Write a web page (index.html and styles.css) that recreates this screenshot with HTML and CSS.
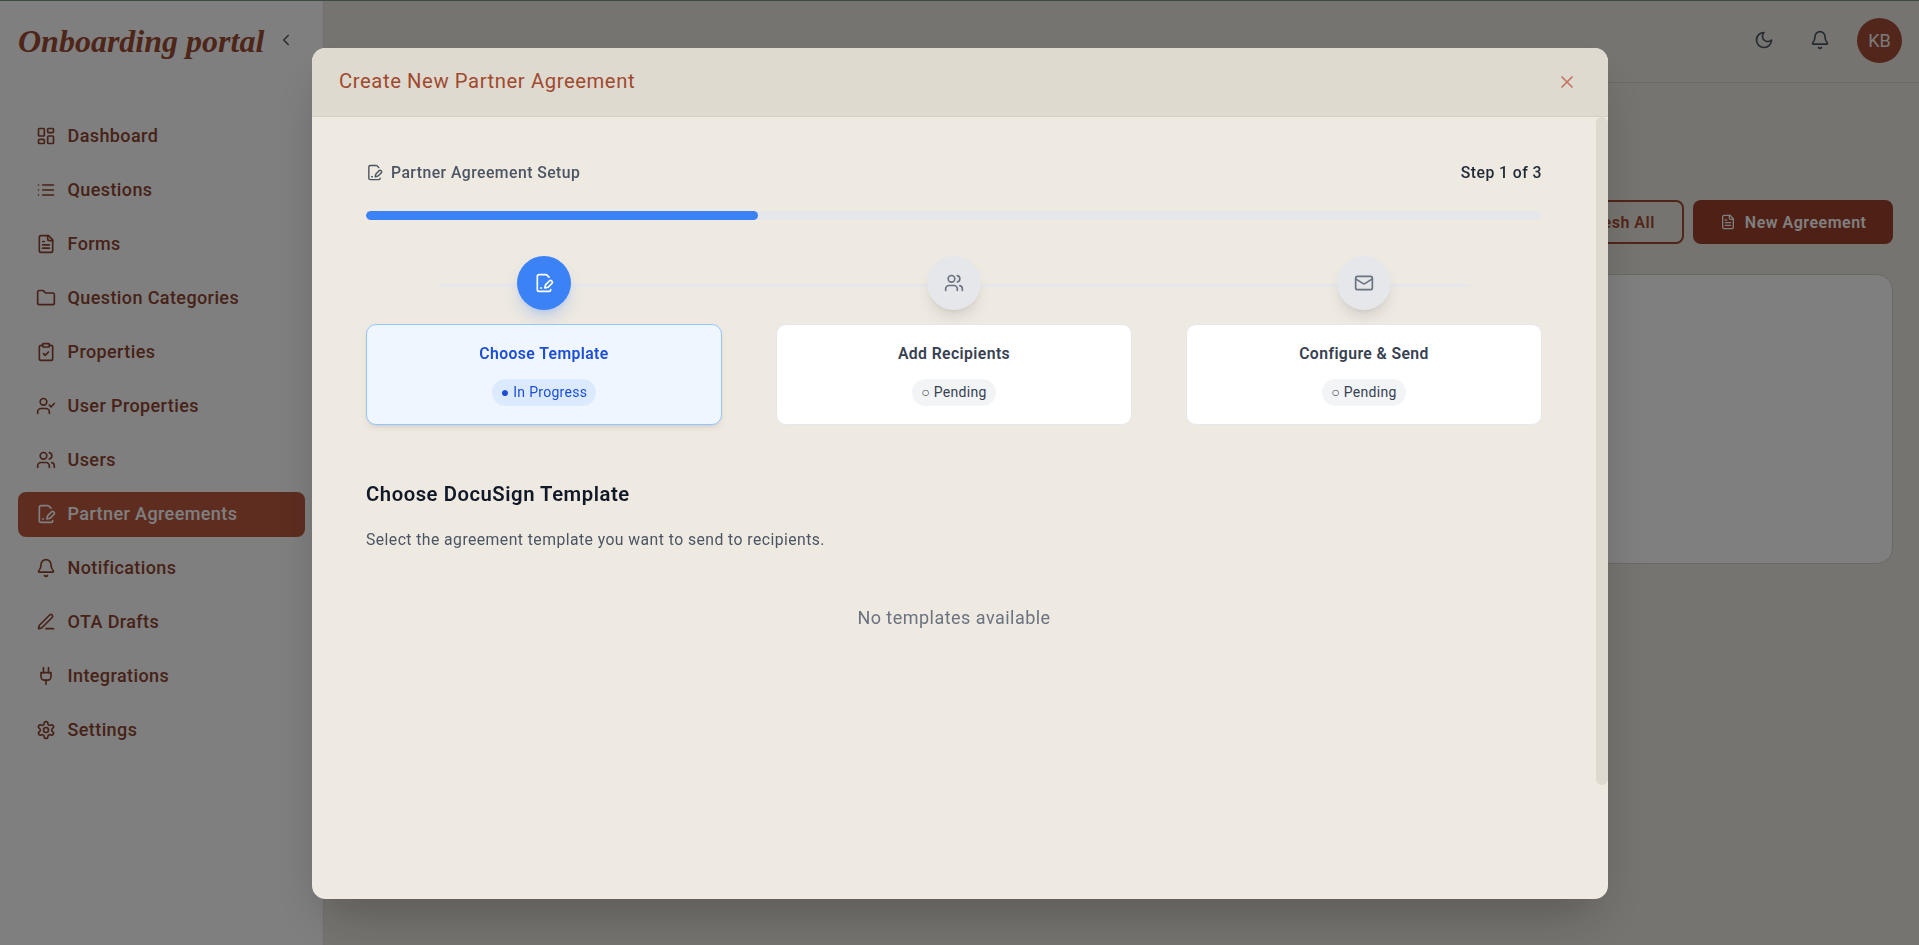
FILE: index.html
```html
<!DOCTYPE html>
<html lang="en">
<head>
<meta charset="utf-8">
<title>Onboarding portal</title>
<link rel="stylesheet" href="styles.css">
</head>
<body>
<svg class="sprite" xmlns="http://www.w3.org/2000/svg" aria-hidden="true">
  <symbol id="i-dashboard" viewBox="0 0 24 24"><rect width="7" height="9" x="3" y="3" rx="1"/><rect width="7" height="5" x="14" y="3" rx="1"/><rect width="7" height="9" x="14" y="12" rx="1"/><rect width="7" height="5" x="3" y="16" rx="1"/></symbol>
  <symbol id="i-list" viewBox="0 0 24 24"><path d="M3 12h.01M3 18h.01M3 6h.01M8 12h13M8 18h13M8 6h13"/></symbol>
  <symbol id="i-file" viewBox="0 0 24 24"><path d="M15 2H6a2 2 0 0 0-2 2v16a2 2 0 0 0 2 2h12a2 2 0 0 0 2-2V7Z"/><path d="M14 2v4a2 2 0 0 0 2 2h4"/><path d="M10 9H8M16 13H8M16 17H8"/></symbol>
  <symbol id="i-folder" viewBox="0 0 24 24"><path d="M20 20a2 2 0 0 0 2-2V8a2 2 0 0 0-2-2h-7.9a2 2 0 0 1-1.69-.9L9.6 3.9A2 2 0 0 0 7.93 3H4a2 2 0 0 0-2 2v13a2 2 0 0 0 2 2Z"/></symbol>
  <symbol id="i-clipboard" viewBox="0 0 24 24"><rect width="8" height="4" x="8" y="2" rx="1" ry="1"/><path d="M16 4h2a2 2 0 0 1 2 2v14a2 2 0 0 1-2 2H6a2 2 0 0 1-2-2V6a2 2 0 0 1 2-2h2"/><path d="m9 14 2 2 4-4"/></symbol>
  <symbol id="i-user-check" viewBox="0 0 24 24"><path d="M16 21v-2a4 4 0 0 0-4-4H6a4 4 0 0 0-4 4v2"/><circle cx="9" cy="7" r="4"/><polyline points="16 11 18 13 22 9"/></symbol>
  <symbol id="i-users" viewBox="0 0 24 24"><path d="M16 21v-2a4 4 0 0 0-4-4H6a4 4 0 0 0-4 4v2"/><circle cx="9" cy="7" r="4"/><path d="M22 21v-2a4 4 0 0 0-3-3.87"/><path d="M16 3.13a4 4 0 0 1 0 7.75"/></symbol>
  <symbol id="i-file-pen" viewBox="0 0 24 24"><path d="m18 5-2.414-2.414A2 2 0 0 0 14.172 2H6a2 2 0 0 0-2 2v16a2 2 0 0 0 2 2h12a2 2 0 0 0 2-2"/><path d="M21.378 12.626a1 1 0 0 0-3.004-3.004l-4.01 4.012a2 2 0 0 0-.506.854l-.837 2.87a.5.5 0 0 0 .62.62l2.87-.837a2 2 0 0 0 .854-.506z"/><path d="M8 18h1"/></symbol>
  <symbol id="i-bell" viewBox="0 0 24 24"><path d="M10.268 21a2 2 0 0 0 3.464 0"/><path d="M3.262 15.326A1 1 0 0 0 4 17h16a1 1 0 0 0 .74-1.673C19.41 13.956 18 12.499 18 8A6 6 0 0 0 6 8c0 4.499-1.411 5.956-2.738 7.326"/></symbol>
  <symbol id="i-pen" viewBox="0 0 24 24"><path d="M12 20h9"/><path d="M16.376 3.622a1 1 0 0 1 3.002 3.002L7.368 18.635a2 2 0 0 1-.855.506l-2.872.838a.5.5 0 0 1-.62-.62l.838-2.872a2 2 0 0 1 .506-.854z"/></symbol>
  <symbol id="i-plug" viewBox="0 0 24 24"><path d="M12 22v-5M9 8V2M15 8V2"/><path d="M18 8v5a4 4 0 0 1-4 4h-4a4 4 0 0 1-4-4V8Z"/></symbol>
  <symbol id="i-settings" viewBox="0 0 24 24"><path d="M12.22 2h-.44a2 2 0 0 0-2 2v.18a2 2 0 0 1-1 1.73l-.43.25a2 2 0 0 1-2 0l-.15-.08a2 2 0 0 0-2.73.73l-.22.38a2 2 0 0 0 .73 2.73l.15.1a2 2 0 0 1 1 1.72v.51a2 2 0 0 1-1 1.74l-.15.09a2 2 0 0 0-.73 2.73l.22.38a2 2 0 0 0 2.73.73l.15-.08a2 2 0 0 1 2 0l.43.25a2 2 0 0 1 1 1.73V20a2 2 0 0 0 2 2h.44a2 2 0 0 0 2-2v-.18a2 2 0 0 1 1-1.73l.43-.25a2 2 0 0 1 2 0l.15.08a2 2 0 0 0 2.73-.73l.22-.39a2 2 0 0 0-.73-2.73l-.15-.08a2 2 0 0 1-1-1.74v-.5a2 2 0 0 1 1-1.74l.15-.09a2 2 0 0 0 .73-2.73l-.22-.38a2 2 0 0 0-2.73-.73l-.15.08a2 2 0 0 1-2 0l-.43-.25a2 2 0 0 1-1-1.73V4a2 2 0 0 0-2-2z"/><circle cx="12" cy="12" r="3"/></symbol>
  <symbol id="i-moon" viewBox="0 0 24 24"><path d="M12 3a6 6 0 0 0 9 9 9 9 0 1 1-9-9Z"/></symbol>
  <symbol id="i-mail" viewBox="0 0 24 24"><rect width="20" height="16" x="2" y="4" rx="2"/><path d="m22 7-8.97 5.7a1.94 1.94 0 0 1-2.06 0L2 7"/></symbol>
  <symbol id="i-x" viewBox="0 0 24 24"><path d="M18 6 6 18M6 6l12 12"/></symbol>
  <symbol id="i-chevron" viewBox="0 0 24 24"><path d="m15 18-6-6 6-6"/></symbol>
</svg>

<div class="app">
  <aside class="sidebar">
    <div class="brand">
      <span class="brand-name">Onboarding portal</span>
      <svg class="icon chevron"><use href="#i-chevron"/></svg>
    </div>
    <nav class="nav">
      <a class="nav-item"><svg class="icon"><use href="#i-dashboard"/></svg>Dashboard</a>
      <a class="nav-item"><svg class="icon"><use href="#i-list"/></svg>Questions</a>
      <a class="nav-item"><svg class="icon"><use href="#i-file"/></svg>Forms</a>
      <a class="nav-item"><svg class="icon"><use href="#i-folder"/></svg>Question Categories</a>
      <a class="nav-item"><svg class="icon"><use href="#i-clipboard"/></svg>Properties</a>
      <a class="nav-item"><svg class="icon"><use href="#i-user-check"/></svg>User Properties</a>
      <a class="nav-item"><svg class="icon"><use href="#i-users"/></svg>Users</a>
      <a class="nav-item active"><svg class="icon"><use href="#i-file-pen"/></svg>Partner Agreements</a>
      <a class="nav-item"><svg class="icon"><use href="#i-bell"/></svg>Notifications</a>
      <a class="nav-item"><svg class="icon"><use href="#i-pen"/></svg>OTA Drafts</a>
      <a class="nav-item"><svg class="icon"><use href="#i-plug"/></svg>Integrations</a>
      <a class="nav-item"><svg class="icon"><use href="#i-settings"/></svg>Settings</a>
    </nav>
  </aside>
  <main class="main">
    <header class="topbar">
      <svg class="icon top-icon"><use href="#i-moon"/></svg>
      <svg class="icon top-icon"><use href="#i-bell"/></svg>
      <div class="avatar">KB</div>
    </header>
    <section class="page">
      <div class="actions">
        <button class="btn btn-outline">Refresh All</button>
        <button class="btn btn-solid"><svg class="icon btn-icon"><use href="#i-file"/></svg>New Agreement</button>
      </div>
      <div class="panel"></div>
    </section>
  </main>
</div>

<div class="backdrop"></div>
<div class="modal">
  <div class="modal-head">
    <h2 class="modal-title">Create New Partner Agreement</h2>
    <svg class="icon close"><use href="#i-x"/></svg>
  </div>
  <div class="modal-body">
    <div class="modal-thumb"></div>
    <div class="modal-content">
      <div class="setup-row">
        <span class="setup-label"><svg class="icon setup-icon"><use href="#i-file-pen"/></svg>Partner Agreement Setup</span>
        <span class="setup-step">Step 1 of 3</span>
      </div>
      <div class="progress"><div class="progress-fill"></div></div>
      <div class="steps">
        <div class="steps-line"></div>
        <div class="step current">
          <div class="step-circle"><svg class="icon"><use href="#i-file-pen"/></svg></div>
          <div class="step-card">
            <div class="step-title">Choose Template</div>
            <span class="step-badge">● In Progress</span>
          </div>
        </div>
        <div class="step">
          <div class="step-circle"><svg class="icon"><use href="#i-users"/></svg></div>
          <div class="step-card">
            <div class="step-title">Add Recipients</div>
            <span class="step-badge">○ Pending</span>
          </div>
        </div>
        <div class="step">
          <div class="step-circle"><svg class="icon"><use href="#i-mail"/></svg></div>
          <div class="step-card">
            <div class="step-title">Configure &amp; Send</div>
            <span class="step-badge">○ Pending</span>
          </div>
        </div>
      </div>
      <h3 class="section-title">Choose DocuSign Template</h3>
      <p class="section-text">Select the agreement template you want to send to recipients.</p>
      <p class="empty">No templates available</p>
    </div>
  </div>
</div>
</body>
</html>
```

FILE: styles.css
```css
* { box-sizing: border-box; }
html, body { margin: 0; height: 100%; overflow: hidden; }
body {
  font-family: Roboto, "Liberation Sans", sans-serif;
  background: #ede9e1;
  border-top: 1px solid #7f957c;
}
.sprite { display: none; }
.icon {
  width: 20px; height: 20px; flex: none;
  fill: none; stroke: currentColor; stroke-width: 2;
  stroke-linecap: round; stroke-linejoin: round;
}
.app { display: flex; height: 944px; }

.sidebar {
  width: 324px; flex: none; background: #fff;
  border-right: 1px solid #e2ded6;
  display: flex; flex-direction: column;
}
.brand {
  height: 112.5px; padding: 0 18px 32px;
  display: flex; align-items: center; justify-content: space-between;
}
.brand-name {
  font-family: "Liberation Serif", serif; font-style: italic; font-weight: 700;
  font-size: 32px; color: #9c4a33; white-space: nowrap;
}
.chevron { width: 18px; height: 18px; color: #555; margin: 0 10px 2px 0; }
.nav { display: flex; flex-direction: column; gap: 9px; padding: 0 18px; }
.nav-item {
  height: 45px; padding: 0 18px 1px; border-radius: 8px;
  display: flex; align-items: center; gap: 11.5px;
  font-size: 18px; font-weight: 500; letter-spacing: .4px; color: #8f4530;
}
.nav-item.active { background: #bc5a41; color: #fff; }

.main { flex: 1; min-width: 0; display: flex; flex-direction: column; }
.topbar {
  height: 82px; flex: none; border-bottom: 1px solid #d8d4cc;
  display: flex; align-items: center; justify-content: flex-end;
  padding: 0 17px 3px 0;
}
.top-icon { color: #4b5563; margin-right: 36px; }
.top-icon + .top-icon { margin-right: 27px; }
.avatar {
  width: 45px; height: 45px; border-radius: 50%; background: #a44c34; color: #f4f4f4;
  display: flex; align-items: center; justify-content: center;
  font-size: 18px; font-weight: 450;
}
.page { padding: 117px 26px 0 27px; }
.actions { display: flex; justify-content: flex-end; gap: 9px; }
.btn {
  height: 44px; border-radius: 8px; padding: 0 27px;
  display: flex; align-items: center; gap: 9px;
  font-family: inherit; font-size: 16px; font-weight: 600; letter-spacing: .5px;
}
.btn-outline { background: transparent; border: 2px solid #a44a33; color: #a44a33; padding: 0 27.5px; }
.btn-solid { background: #9e402a; border: 0; color: #fff; padding: 0 26.5px; }
.btn-icon { width: 16px; height: 16px; }
.panel {
  height: 290px; margin-top: 30px; background: #fff;
  border: 1px solid #d5d1c8; border-radius: 16px;
}

.backdrop { position: fixed; inset: 0; background: rgba(0,0,0,.5); }
.modal {
  position: fixed; left: 312px; top: 48px; width: 1296px; height: 851px;
  background: #eee9e1; border-radius: 13.5px; overflow: hidden;
  display: flex; flex-direction: column;
  box-shadow: 0 25px 50px -12px rgba(0,0,0,.25);
}
.modal-head {
  height: 69px; flex: none; background: #dfdacf; border-bottom: 1px solid #d5d0c5;
  display: flex; align-items: center; justify-content: space-between;
  padding: 0 31px 2px 27px;
}
.modal-title { margin: 0; font-size: 20.25px; font-weight: 450; letter-spacing: .58px; color: #a0492f; }
.close { color: #c2745f; margin-top: 2px; }
.modal-body { position: relative; flex: 1; min-height: 0; padding-right: 12px; overflow: hidden; }
.modal-thumb {
  position: absolute; top: 0; right: 0; width: 12px; height: 668px;
  background: #dfdacf; border-radius: 6px;
}
.modal-content { padding: 43px 54px 0; }
.setup-row {
  height: 24px; display: flex; align-items: center; justify-content: space-between;
  font-size: 15.75px; font-weight: 500; letter-spacing: .45px;
}
.setup-label { display: flex; align-items: center; gap: 8px; color: #4b5563; }
.setup-icon { width: 17px; height: 17px; }
.setup-step { color: #1f2937; }
.progress { height: 9px; margin-top: 27px; background: #e5e7eb; border-radius: 5px; overflow: hidden; }
.progress-fill { width: 33.33%; height: 100%; background: #3b82f6; border-radius: 5px; }
.steps {
  position: relative; margin-top: 36px;
  display: grid; grid-template-columns: repeat(3, 1fr); gap: 54px;
}
.steps-line { position: absolute; left: 72px; right: 72px; top: 28px; height: 3px; background: #e5e7eb; }
.step { position: relative; display: flex; flex-direction: column; align-items: center; }
.step-circle {
  width: 54px; height: 54px; border-radius: 50%; background: #e5e7eb; color: #6b7280;
  display: flex; align-items: center; justify-content: center;
  box-shadow: 0 10px 15px -3px rgba(0,0,0,.1), 0 4px 6px -4px rgba(0,0,0,.1);
}
.current .step-circle { background: #3b82f6; color: #fff; box-shadow: 0 10px 15px -3px rgba(59,130,246,.25), 0 4px 6px -4px rgba(59,130,246,.25); }
.step-card {
  width: 100%; height: 101px; margin-top: 14px; padding-top: 17px;
  background: #fff; border: 1px solid #e5e7eb; border-radius: 10px; text-align: center;
}
.current .step-card { background: #eff6ff; border-color: #93c5fd; box-shadow: 0 4px 6px -1px rgba(0,0,0,.08), 0 2px 4px -2px rgba(0,0,0,.08); }
.step-title { font-size: 15.75px; font-weight: 600; line-height: 24px; letter-spacing: .4px; color: #374151; }
.current .step-title { color: #1d4ed8; }
.step-badge {
  display: inline-block; margin-top: 13px; padding: 0 9px; height: 27px; line-height: 27px;
  border-radius: 14px; background: #f3f4f6; color: #374151;
  font-size: 14px; font-weight: 450; letter-spacing: .3px;
}
.current .step-badge { background: #dbeafe; color: #1d4ed8; }
.section-title { margin: 56px 0 0; font-size: 20.25px; font-weight: 600; line-height: 27px; letter-spacing: .55px; color: #111827; }
.section-text { margin: 19.5px 0 0; font-size: 15.75px; line-height: 24px; letter-spacing: .44px; color: #4b5563; }
.empty { margin: 52.5px 0 0; font-size: 18px; line-height: 27px; letter-spacing: .47px; color: #6b7280; text-align: center; }
```
